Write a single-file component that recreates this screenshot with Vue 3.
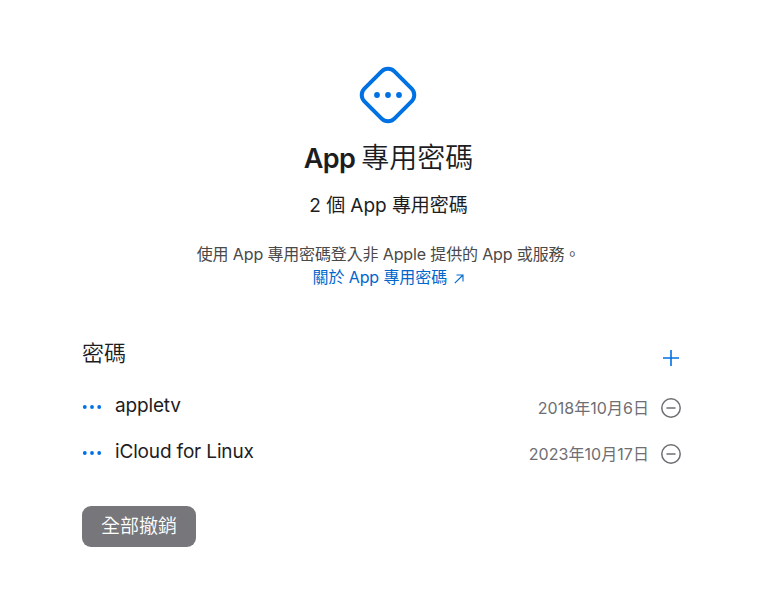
<script setup>
const passwords = [
  { name: 'appletv', date: '2018年10月6日' },
  { name: 'iCloud for Linux', date: '2023年10月17日' },
]
</script>

<template>
  <main class="page">
    <header class="hero">
      <svg class="logo" width="60" height="60" viewBox="0 0 60 60">
        <rect x="8.8" y="8.8" width="42.4" height="42.4" rx="9" transform="rotate(45 30 30)" fill="none" stroke="#0071e3" stroke-width="4" />
        <g fill="#0071e3"><circle cx="19" cy="30" r="2.9" /><circle cx="30" cy="30" r="2.9" /><circle cx="41" cy="30" r="2.9" /></g>
      </svg>
      <h1><b>App</b> 專用密碼</h1>
      <p class="count">2 個 App 專用密碼</p>
      <p class="intro">使用 App 專用密碼登入非 Apple 提供的 App 或服務。</p>
      <a class="link">關於 App 專用密碼
        <svg width="10" height="10" viewBox="0 0 10 10"><path d="M.8 9.2 9 1M2.5 1H9V7.5" fill="none" stroke="currentColor" stroke-width="1.1" /></svg>
      </a>
    </header>
    <section class="list">
      <div class="head">
        <h2>密碼</h2>
        <svg class="plus" width="20" height="20" viewBox="0 0 20 20"><path d="M9 2V18M1 10H17" stroke="#0071e3" stroke-width="1.6" /></svg>
      </div>
      <div v-for="p in passwords" :key="p.name" class="row">
        <svg class="dots" width="20" height="6" viewBox="0 0 20 6" fill="#0071e3"><circle cx="2.8" cy="3" r="1.9" /><circle cx="10" cy="3" r="1.9" /><circle cx="17.2" cy="3" r="1.9" /></svg>
        <span class="name">{{ p.name }}</span>
        <span class="date">{{ p.date }}</span>
        <svg class="minus" width="22" height="22" viewBox="0 0 22 22" fill="none" stroke="#6e6e73" stroke-width="1.5"><circle cx="11" cy="11" r="9.2" /><path d="M6.5 11H15.5" /></svg>
      </div>
    </section>
    <button class="revoke">全部撤銷</button>
  </main>
</template>

<style>
body { background: #fff; }
</style>

<style scoped>
.page { box-sizing: border-box; width: 775px; height: 607px; padding: 65px 93px 0 82px; font-family: Inter, "Noto Sans CJK TC", sans-serif; color: #1d1d1f; }
.hero { display: flex; flex-direction: column; align-items: center; height: 269px; margin-right: -13px; white-space: nowrap; }
.logo { flex: none; margin-right: 1px; }
h1, h2, p { margin: 0; font-weight: 350; }
h1 { font-size: 28px; line-height: 34px; margin-top: 16px; word-spacing: -2px; }
h1 b { font-size: 27px; font-weight: 600; letter-spacing: -0.6px; }
.count { font-size: 19px; line-height: 26px; margin-top: 17px; font-weight: 400; letter-spacing: -0.05px; }
.intro { font-size: 16px; line-height: 23px; margin-top: 24px; font-weight: 400; letter-spacing: -0.14px; color: #494949; }
.link { font-size: 16px; line-height: 23px; letter-spacing: -0.1px; color: #0066cc; }
.link svg { margin-left: 3px; vertical-align: -1px; }
.head { display: flex; justify-content: space-between; align-items: center; height: 48px; }
h2 { font-size: 22px; line-height: 32px; margin-top: -10px; }
.row { display: flex; align-items: center; height: 46px; }
.dots { margin-top: 3px; }
.name { font-size: 19px; letter-spacing: -0.16px; margin-left: 13px; }
.date { font-size: 16px; color: #6e6e73; margin: 3px 11px 0 auto; letter-spacing: 0.05px; }
.minus { margin-top: 5px; }
.revoke { display: block; width: 114px; height: 41px; margin-top: 32px; border: 0; padding: 0; border-radius: 9px; background: #76767b; color: #fff; font: 350 19px/41px Inter, "Noto Sans CJK TC", sans-serif; }
</style>
